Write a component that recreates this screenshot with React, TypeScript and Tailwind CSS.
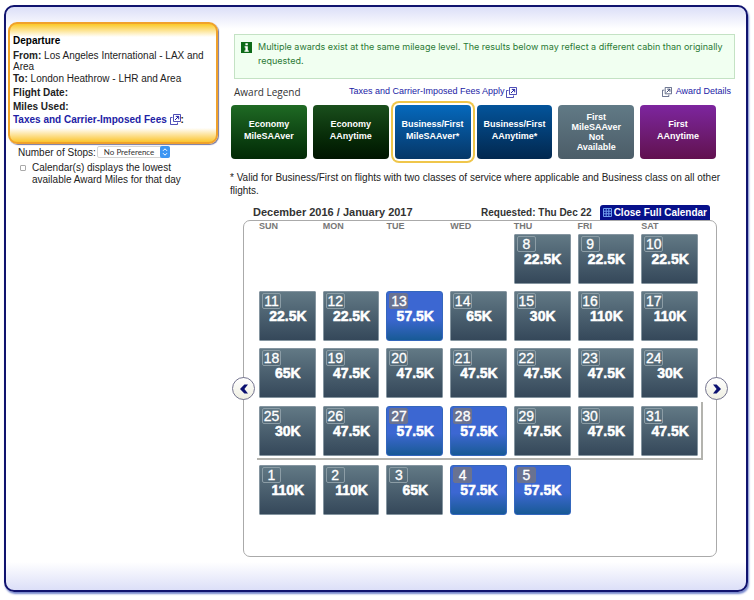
import clsx from 'clsx';
import { useState } from 'react';

type Day = { day: number; price: string };

const WEEKDAYS = ['SUN', 'MON', 'TUE', 'WED', 'THU', 'FRI', 'SAT'];

const DECEMBER: (Day | null)[][] = [
  [null, null, null, null, { day: 8, price: '22.5K' }, { day: 9, price: '22.5K' }, { day: 10, price: '22.5K' }],
  [
    { day: 11, price: '22.5K' },
    { day: 12, price: '22.5K' },
    { day: 13, price: '57.5K' },
    { day: 14, price: '65K' },
    { day: 15, price: '30K' },
    { day: 16, price: '110K' },
    { day: 17, price: '110K' },
  ],
  [
    { day: 18, price: '65K' },
    { day: 19, price: '47.5K' },
    { day: 20, price: '47.5K' },
    { day: 21, price: '47.5K' },
    { day: 22, price: '47.5K' },
    { day: 23, price: '47.5K' },
    { day: 24, price: '30K' },
  ],
];

const LAST_WEEK: Day[] = [
  { day: 25, price: '30K' },
  { day: 26, price: '47.5K' },
  { day: 27, price: '57.5K' },
  { day: 28, price: '57.5K' },
  { day: 29, price: '47.5K' },
  { day: 30, price: '47.5K' },
  { day: 31, price: '47.5K' },
];

const JANUARY: Day[] = [
  { day: 1, price: '110K' },
  { day: 2, price: '110K' },
  { day: 3, price: '65K' },
  { day: 4, price: '57.5K' },
  { day: 5, price: '57.5K' },
];

const LEGEND = [
  { lines: ['Economy', 'MileSAAver'], color: 'from-[#1f6a24] to-[#032a06]' },
  { lines: ['Economy', 'AAnytime'], color: 'from-[#1a4f1c] to-[#011501]' },
  { lines: ['Business/First', 'MileSAAver*'], color: 'from-[#0569bd] to-[#053768]' },
  { lines: ['Business/First', 'AAnytime*'], color: 'from-[#03549b] to-[#02284f]' },
  { lines: ['First', 'MileSAAver', 'Not', 'Available'], color: 'from-[#617a86] to-[#4c5d68]' },
  { lines: ['First', 'AAnytime'], color: 'from-[#7d259f] to-[#61104f]' },
];

function PopupIcon({ className }: { className?: string }) {
  return (
    <svg viewBox="0 0 11 11" className={clsx('inline-block', className)} fill="none" stroke="currentColor">
      <path d="M3.5 .5h7v7h-7z" strokeWidth=".8" />
      <path d="M2.5 3.5h-2v7h7v-2" strokeWidth=".8" />
      <path d="M5 6l3.6-3.6M5.8 2.4h2.9v2.9" strokeWidth="1" />
    </svg>
  );
}

function DayCell({ day, price }: Day) {
  const isSaver = price === '57.5K';
  return (
    <button
      type="button"
      className={clsx(
        'flex h-[50px] flex-col border px-px pt-px text-white bg-gradient-to-b',
        isSaver
          ? 'rounded-[3px] border-[#3467bd] from-[#3c67d2] from-55% to-[#175a96]'
          : 'rounded-[1px] border-[#8595a0] from-[#627985] to-[#35485a]',
      )}
    >
      <span
        className={clsx(
          'ml-px h-4 w-[19px] rounded-[2px] border text-center text-[14px] leading-[15px] [-webkit-text-stroke:0.3px_white]',
          isSaver ? 'border-[#6a7390] bg-[#697291]' : 'border-[#8c9da6]',
        )}
      >
        {day}
      </span>
      <span className="w-full pl-px text-center text-[14px] leading-[14px] font-bold [-webkit-text-stroke:0.5px_white]">
        {price}
      </span>
    </button>
  );
}

function NavButton({ direction, className }: { direction: 'left' | 'right'; className: string }) {
  return (
    <button
      type="button"
      aria-label={direction === 'left' ? 'Previous dates' : 'Next dates'}
      className={clsx(
        'absolute top-[156px] flex h-[23px] w-[23px] items-center justify-center rounded-full border border-[#74748f] bg-gradient-to-b from-white to-[#efefe2]',
        className,
      )}
    >
      <svg viewBox="0 0 10 10" className={clsx('h-[10px] w-[10px]', direction === 'left' && 'rotate-180')}>
        <path d="M1 .5h3.6L9 5 4.6 9.5H1L4.6 5z" fill="#0b1170" />
      </svg>
    </button>
  );
}

function DeparturePanel() {
  const [stops, setStops] = useState('any');
  const [lowest, setLowest] = useState(false);

  return (
    <aside className="w-[212px] shrink-0 pt-[15px] pl-0.5 text-[#222]">
      <section className="h-[122px] rounded-[9px] border-2 border-[#f0a22b] bg-[linear-gradient(#fbc927,#fff_13px,#fff_calc(100%-14px),#fbc52e)] pt-[11px] pl-[3px] shadow-[1px_1px_1px_#7878a0]">
        <h2 className="text-[10px] leading-3 font-bold text-black">Departure</h2>
        <p className="mt-[3px] text-[10px] leading-[11px]">
          <b>From:</b> Los Angeles International - LAX and
          <br />
          Area
        </p>
        <p className="text-[10px] leading-[14px]">
          <b>To:</b> London Heathrow - LHR and Area
        </p>
        <p className="text-[10px] leading-[14px] font-bold">Flight Date:</p>
        <p className="text-[10px] leading-[13px] font-bold">Miles Used:</p>
        <p className="text-[10px] leading-[14px] font-bold">
          <a href="#fees" className="text-[#2222a5]">
            Taxes and Carrier-Imposed Fees <PopupIcon className="-mt-px h-[11px] w-[11px]" />
          </a>
          :
        </p>
      </section>

      <div className="mt-0.5 flex h-3 items-center pl-2.5 text-[10px]">
        <label htmlFor="stops">Number of Stops:</label>
        <span className="relative ml-px flex">
          <select
            id="stops"
            value={stops}
            onChange={(e) => setStops(e.target.value)}
            className="h-3 w-[73px] appearance-none rounded-[2px] border border-[#d4d4d4] bg-white pl-1.5 font-[Lato,sans-serif] text-[8px] leading-[9px] text-[#333]"
          >
            <option value="any">No Preference</option>
            <option value="0">Nonstop</option>
            <option value="1">1 Stop</option>
          </select>
          <svg viewBox="0 0 10 12" className="pointer-events-none absolute top-0 right-0 h-3 w-[10px]">
            <rect width="10" height="12" rx="2" fill="#3d96f3" />
            <path d="M3 4.8l2-2 2 2M3 7.2l2 2 2-2" fill="none" stroke="#fff" strokeWidth="1" />
          </svg>
        </span>
      </div>

      <div className="mt-1 flex gap-1.5 pl-3 text-[10px] leading-3">
        <input
          id="lowest"
          type="checkbox"
          checked={lowest}
          onChange={(e) => setLowest(e.target.checked)}
          className="mt-[3px] h-1.5 w-1.5 shrink-0 appearance-none rounded-[1px] border border-[#aaa] bg-white checked:bg-blue-500"
        />
        <label htmlFor="lowest">
          Calendar(s) displays the lowest
          <br />
          available Award Miles for that day
        </label>
      </div>
    </aside>
  );
}

function AwardLegend() {
  const [selected, setSelected] = useState(2);

  return (
    <section className="mt-1.5">
      <div className="flex h-[14px] items-center pl-1 text-[9px] text-[#2222a5]">
        <h2 className="w-[115px] font-['Open_Sans',sans-serif] text-[10px] text-[#333]">Award Legend</h2>
        <a href="#fees" className="flex items-center gap-px">
          Taxes and Carrier-Imposed Fees Apply <PopupIcon className="h-[11px] w-[11px]" />
        </a>
        <a href="#details" className="mr-1.5 ml-auto flex items-center gap-1">
          <PopupIcon className="h-[10px] w-[10px] text-[#333f66]" /> Award Details
        </a>
      </div>
      <div className="mt-1.5 mr-[21px] ml-px grid grid-cols-6 gap-1.5">
        {LEGEND.map(({ lines, color }, i) => (
          <button
            key={i}
            type="button"
            onClick={() => setSelected(i)}
            className={clsx(
              'flex h-[54px] flex-col items-center justify-center rounded-[4px] bg-gradient-to-b text-[9px] font-bold text-white',
              lines.length > 2 ? 'leading-[10px]' : 'pb-1 leading-3',
              color,
              selected === i && 'shadow-[0_0_0_2px_white,0_0_0_4px_#efc64b]',
            )}
          >
            {lines.map((line) => (
              <span key={line}>{line}</span>
            ))}
          </button>
        ))}
      </div>
      <p className="mt-3 text-[10px] leading-[13px] text-[#222]">
        * Valid for Business/First on flights with two classes of service where applicable and Business class on all other
        flights.
      </p>
    </section>
  );
}

function Calendar() {
  return (
    <section className="mt-2 mr-5 ml-[13px]">
      <header className="flex h-[15px] items-center pr-[7px] pl-2.5 text-[#333]">
        <h2 className="text-[11px] font-bold">December 2016 / January 2017</h2>
        <span className="mr-2 ml-auto text-[10px] font-bold">Requested: Thu Dec 22</span>
        <button
          type="button"
          className="flex h-[15px] items-center gap-0.5 rounded-t-[3px] bg-[#07118b] px-[3px] text-[10px] font-bold text-white"
        >
          <svg viewBox="0 0 9 9" className="h-[9px] w-[9px]">
            <path d="M.5 .5h8v8h-8zM3.2 .5v8M5.8 .5v8M.5 3.2h8M.5 5.8h8" fill="none" stroke="#6f9ff0" />
          </svg>
          Close Full Calendar
        </button>
      </header>

      <div className="relative rounded-[7px] border border-[#aaa] px-[13px] pb-[41px]">
        <div className="grid grid-cols-7 gap-x-[7px] pr-[5px] pl-0.5 text-[9px] leading-[11px] font-bold text-[#777]">
          {WEEKDAYS.map((name) => (
            <span key={name}>{name}</span>
          ))}
        </div>
        <div className="mt-0.5 grid grid-cols-7 gap-[7px] pr-[5px] pl-0.5">
          {DECEMBER.flat().map((cell, i) => (cell ? <DayCell key={i} {...cell} /> : <span key={i} />))}
        </div>
        {/* rule that closes the month */}
        <div className="mt-1 grid grid-cols-7 gap-[7px] border-r-2 border-b-2 border-[#b3b3ae] pt-1 pr-[3px] pb-0.5 pl-0.5">
          {LAST_WEEK.map((cell) => (
            <DayCell key={cell.day} {...cell} />
          ))}
        </div>
        <div className="mt-[5px] grid grid-cols-7 gap-[7px] pr-[5px] pl-0.5">
          {JANUARY.map((cell) => (
            <DayCell key={cell.day} {...cell} />
          ))}
        </div>
        <NavButton direction="left" className="-left-3" />
        <NavButton direction="right" className="-right-3" />
      </div>
    </section>
  );
}

export default function App() {
  return (
    <div className="bg-white pt-[5px] pr-1.5 pb-2 pl-1 font-['Liberation_Sans',Arial,sans-serif]">
      <main className="flex gap-3 rounded-[10px] border-2 border-[#10136f] bg-[linear-gradient(#dcdff8,#fff_22px,#fff_calc(100%-28px),#dcdff8)] pb-[33px] shadow-[1px_2px_2px_#7485cc]">
        <DeparturePanel />
        <div className="min-w-0 flex-1 pt-[27px] pr-[9px]">
          <div className="mr-0.5 ml-1 flex h-[45px] gap-1.5 border border-[#c4e2c4] bg-[#f1fff1] pt-[5px] pl-1.5 text-[9px] leading-[14px] text-[#2b7a35]">
            <svg viewBox="0 0 11 11" className="mt-0.5 h-[11px] w-[11px] shrink-0">
              <rect width="11" height="11" fill="#0c6a17" />
              <path d="M4.4 1.2h2.4v2H4.4zM3.6 4.2h3.2v4.4h1v1.2H3.4V8.6h1V5.4h-.8z" fill="#fff" />
            </svg>
            <p className="font-[Inter,sans-serif]">
              Multiple awards exist at the same mileage level. The results below may reflect a different cabin than
              originally requested.
            </p>
          </div>
          <AwardLegend />
          <Calendar />
        </div>
      </main>
    </div>
  );
}
